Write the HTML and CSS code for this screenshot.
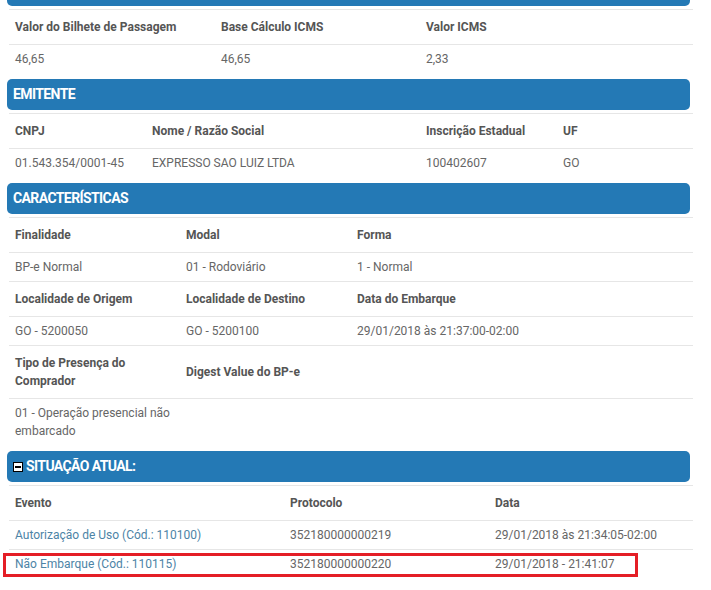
FILE: index.html
```html
<!DOCTYPE html>
<html lang="pt-BR">
<head>
<meta charset="utf-8">
<title>BP-e</title>
<link rel="stylesheet" href="styles.css">
</head>
<body>
<div class="page">
  <div class="bar bar-first"></div>
  <div class="grid g-valores">
    <div class="th">Valor do Bilhete de Passagem</div>
    <div class="th">Base Cálculo ICMS</div>
    <div class="th">Valor ICMS</div>
    <div class="td">46,65</div>
    <div class="td">46,65</div>
    <div class="td">2,33</div>
  </div>

  <div class="bar">EMITENTE</div>
  <div class="grid g-emit">
    <div class="th">CNPJ</div>
    <div class="th">Nome / Razão Social</div>
    <div class="th">Inscrição Estadual</div>
    <div class="th">UF</div>
    <div class="td">01.543.354/0001-45</div>
    <div class="td">EXPRESSO SAO LUIZ LTDA</div>
    <div class="td">100402607</div>
    <div class="td">GO</div>
  </div>

  <div class="bar">CARACTERÍSTICAS</div>
  <div class="grid g-car">
    <div class="th">Finalidade</div>
    <div class="th">Modal</div>
    <div class="th">Forma</div>
    <div class="th"></div>
    <div class="td">BP-e Normal</div>
    <div class="td">01 - Rodoviário</div>
    <div class="td">1 - Normal</div>
    <div class="td"></div>
    <div class="th">Localidade de Origem</div>
    <div class="th">Localidade de Destino</div>
    <div class="th">Data do Embarque</div>
    <div class="th"></div>
    <div class="td">GO - 5200050</div>
    <div class="td">GO - 5200100</div>
    <div class="td nowrap">29/01/2018 às 21:37:00-02:00</div>
    <div class="td"></div>
    <div class="th">Tipo de Presença do Comprador</div>
    <div class="th">Digest Value do BP-e</div>
    <div class="th"></div>
    <div class="th"></div>
    <div class="td">01 - Operação presencial não embarcado</div>
    <div class="td"></div>
    <div class="td"></div>
    <div class="td"></div>
  </div>

  <div class="bar"><span class="toggle"><svg width="10" height="10" viewBox="0 0 10 10"><rect x="0.5" y="0.5" width="9" height="9" fill="#fff" stroke="#000"/><rect x="2" y="4" width="6" height="2" fill="#000"/></svg></span>SITUAÇÃO ATUAL:</div>
  <div class="grid g-sit">
    <div class="th">Evento</div>
    <div class="th">Protocolo</div>
    <div class="th">Data</div>
    <div class="td ev">Autorização de Uso (Cód.: 110100)</div>
    <div class="td">352180000000219</div>
    <div class="td">29/01/2018 às 21:34:05-02:00</div>
    <div class="td ev hl">Não Embarque (Cód.: 110115)<span class="mark"></span></div>
    <div class="td">352180000000220</div>
    <div class="td">29/01/2018 - 21:41:07</div>
  </div>
</div>
</body>
</html>
```

FILE: styles.css
```css
html, body {
  margin: 0;
  padding: 0;
  background: #fff;
}
body {
  font-family: Roboto, "Liberation Sans", Arial, sans-serif;
  font-size: 12px;
  color: #666;
  overflow: hidden;
}
.page {
  width: 711px;
}
.bar {
  height: 31px;
  margin: 6px 21px 3px 7px;
  background: #2479b5;
  border-radius: 5px;
  color: #fff;
  font-weight: 700;
  font-size: 14px;
  letter-spacing: -0.6px;
  line-height: 31px;
  padding-left: 6px;
  display: flex;
  align-items: center;
  box-sizing: border-box;
}
.bar-first {
  margin-top: -25px;
}
.toggle {
  display: flex;
  width: 10px;
  height: 10px;
  margin-right: 3px;
  margin-top: 1px;
}
.grid {
  display: grid;
  margin-left: 9px;
  width: 684px;
}
.g-valores { grid-template-columns: 206px 205px 1fr; }
.g-emit { grid-template-columns: 137px 274px 137px 1fr; }
.g-car { grid-template-columns: 171px 171px 171px 1fr; }
.g-sit { grid-template-columns: 275px 205px 1fr; }
.th, .td {
  border-top: 1px solid #e6e6e6;
  padding: 8px 6px;
  line-height: 18px;
  display: flex;
  align-items: center;
}
.th {
  font-weight: 700;
  color: #555;
}
.td {
  padding-top: 5px;
  padding-bottom: 5px;
  color: #666;
}
.nowrap {
  white-space: nowrap;
}
.td.ev {
  color: #4d84a6;
}
.hl {
  position: relative;
}
.mark {
  position: absolute;
  left: -6px;
  top: 3px;
  width: 635px;
  height: 24px;
  border: 3px solid #e41e26;
  box-sizing: border-box;
}
```
